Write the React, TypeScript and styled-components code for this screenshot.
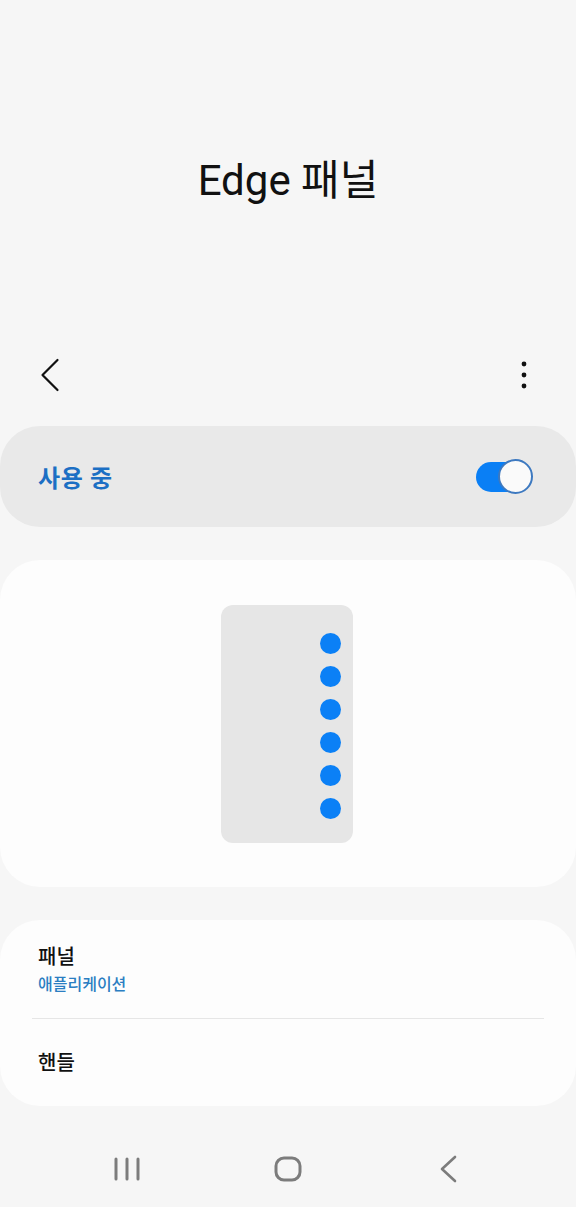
import styled, { createGlobalStyle } from "styled-components";

const GlobalStyle = createGlobalStyle`
  html, body {
    margin: 0;
    padding: 0;
    background: #f6f6f6;
  }
  body {
    font-family: Roboto, "Noto Sans CJK KR", "Noto Sans", sans-serif;
    color: #111111;
  }
  * {
    box-sizing: border-box;
  }
`;

const Screen = styled.div`
  width: 576px;
  min-height: 1207px;
  display: flex;
  flex-direction: column;
  background: #f6f6f6;
`;

const TitleArea = styled.div`
  height: 345px;
  padding-top: 154px;
  display: flex;
  justify-content: center;
`;

const Title = styled.h1`
  margin: 0;
  font-size: 42px;
  line-height: 54px;
  font-weight: 400;
  color: #111111;
`;

const Toolbar = styled.div`
  height: 60px;
  padding: 0 32px 0 30px;
  display: flex;
  align-items: center;
  justify-content: space-between;
`;

const IconButton = styled.button`
  width: 40px;
  height: 40px;
  padding: 0;
  border: none;
  background: none;
  display: flex;
  align-items: center;
  justify-content: center;
`;

const Card = styled.section<{ $tone?: "grey" | "white" }>`
  background: ${(p) => (p.$tone === "grey" ? "#e9e9e9" : "#fdfdfd")};
  border-radius: 40px;
`;

const SwitchCard = styled(Card)`
  margin-top: 21px;
  height: 101px;
  padding: 0 43px 0 38px;
  display: flex;
  align-items: center;
  justify-content: space-between;
`;

const SwitchLabel = styled.span`
  font-size: 24px;
  font-weight: 700;
  color: #1c6fc4;
  letter-spacing: 0.6px;
`;

const Track = styled.div`
  position: relative;
  width: 57px;
  height: 35px;
  display: flex;
  align-items: center;
`;

const TrackBar = styled.div`
  width: 54px;
  height: 30px;
  border-radius: 15px;
  background: #0a7ff5;
`;

const Thumb = styled.div`
  position: absolute;
  right: 0;
  top: 0;
  width: 35px;
  height: 35px;
  border-radius: 50%;
  background: #fafafa;
  border: 2px solid #3d79c0;
`;

const PreviewCard = styled(Card)`
  margin-top: 33px;
  height: 327px;
  display: flex;
  justify-content: center;
  align-items: flex-start;
  padding-top: 45px;
`;

const Phone = styled.div`
  width: 132px;
  height: 238px;
  background: #e6e6e6;
  border-radius: 12px;
  margin-left: -2px;
  padding: 28px 12px 0 0;
  display: flex;
  flex-direction: column;
  align-items: flex-end;
  gap: 12px;
`;

const Dot = styled.span`
  width: 21px;
  height: 21px;
  border-radius: 50%;
  background: #0b80f6;
`;

const ListCard = styled(Card)`
  margin-top: 33px;
  height: 186px;
  display: flex;
  flex-direction: column;
`;

const Row = styled.div<{ $grow?: boolean }>`
  padding: ${(p) => (p.$grow ? "0 38px" : "24px 38px 23px")};
  display: flex;
  flex-direction: column;
  justify-content: center;
  ${(p) => (p.$grow ? "flex: 1;" : "")}
`;

const RowTitle = styled.span`
  font-size: 20px;
  line-height: 26px;
  font-weight: 500;
  color: #111111;
`;

const RowSub = styled.span`
  margin-top: 4px;
  font-size: 16px;
  line-height: 21px;
  font-weight: 500;
  color: #2b7ec2;
`;

const Divider = styled.hr`
  margin: 0 32px;
  border: none;
  height: 1px;
  background: #e6e6e6;
`;

const NavBar = styled.nav`
  margin-top: 24px;
  height: 77px;
  display: grid;
  grid-template-columns: repeat(3, 161px);
  justify-content: center;
  align-items: center;
`;

const NavButton = styled.div`
  display: flex;
  justify-content: center;
  align-items: center;
  height: 100%;
`;

const BackIcon = () => (
  <svg width="20" height="34" viewBox="0 0 20 34" fill="none">
    <polyline
      points="17.5,2 2.5,17 17.5,32"
      stroke="#111"
      strokeWidth="2.2"
      strokeLinecap="round"
      strokeLinejoin="round"
    />
  </svg>
);

const MoreIcon = () => (
  <svg width="8" height="28" viewBox="0 0 8 28" fill="#111">
    <circle cx="4" cy="3" r="2.4" />
    <circle cx="4" cy="14" r="2.4" />
    <circle cx="4" cy="25" r="2.4" />
  </svg>
);

const RecentsIcon = () => (
  <svg width="28" height="26" viewBox="0 0 28 26" fill="none" stroke="#7c7c7c" strokeWidth="3" strokeLinecap="round">
    <line x1="3" y1="3" x2="3" y2="23" />
    <line x1="14" y1="3" x2="14" y2="23" />
    <line x1="25" y1="3" x2="25" y2="23" />
  </svg>
);

const HomeIcon = () => (
  <svg width="30" height="28" viewBox="0 0 30 28" fill="none">
    <rect x="3" y="3" width="24" height="22" rx="8" stroke="#7c7c7c" strokeWidth="3" />
  </svg>
);

const NavBackIcon = () => (
  <svg width="20" height="28" viewBox="0 0 20 28" fill="none">
    <polyline
      points="16,2 3,14 16,26"
      stroke="#7c7c7c"
      strokeWidth="2.6"
      strokeLinecap="round"
      strokeLinejoin="round"
    />
  </svg>
);

export default function App() {
  return (
    <>
      <GlobalStyle />
      <Screen>
        <TitleArea>
          <Title>Edge 패널</Title>
        </TitleArea>

        <Toolbar>
          <IconButton aria-label="뒤로">
            <BackIcon />
          </IconButton>
          <IconButton aria-label="더보기">
            <MoreIcon />
          </IconButton>
        </Toolbar>

        <SwitchCard $tone="grey">
          <SwitchLabel>사용 중</SwitchLabel>
          <Track>
            <TrackBar />
            <Thumb />
          </Track>
        </SwitchCard>

        <PreviewCard>
          <Phone>
            {[0, 1, 2, 3, 4, 5].map((i) => (
              <Dot key={i} />
            ))}
          </Phone>
        </PreviewCard>

        <ListCard>
          <Row>
            <RowTitle>패널</RowTitle>
            <RowSub>애플리케이션</RowSub>
          </Row>
          <Divider />
          <Row $grow>
            <RowTitle>핸들</RowTitle>
          </Row>
        </ListCard>

        <NavBar>
          <NavButton>
            <RecentsIcon />
          </NavButton>
          <NavButton>
            <HomeIcon />
          </NavButton>
          <NavButton>
            <NavBackIcon />
          </NavButton>
        </NavBar>
      </Screen>
    </>
  );
}
